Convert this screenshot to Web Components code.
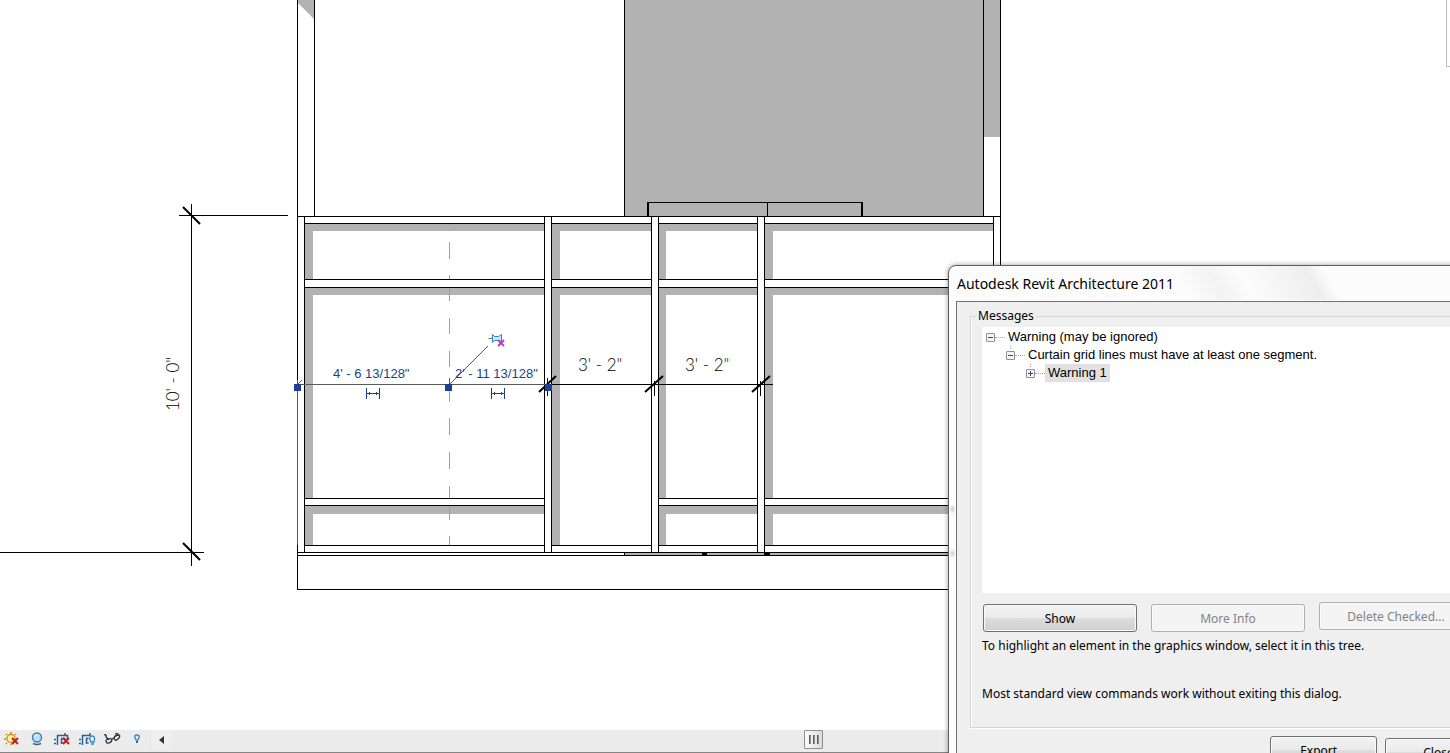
<!DOCTYPE html>
<html lang="en">
<head>
<meta charset="utf-8">
<title>Autodesk Revit Architecture 2011</title>
<style>
html, body { margin: 0; height: 100%; overflow: hidden; background: #fff; color: #000; font: 12px/16px "Noto Sans", sans-serif; }
</style>
</head>
<body>
<revit-app></revit-app>
<script>
const define = (name, html, setup) => {
  const template = document.createElement('template');
  template.innerHTML = html;
  customElements.define(name, class extends HTMLElement {
    constructor() {
      super();
      this.attachShadow({ mode: 'open' }).append(template.content.cloneNode(true));
    }
    connectedCallback() { if (setup) setup(this); }
  });
};

/* Elevation drawing: curtain wall, dimensions and the selected grid line */
define('elevation-view', `
<style>
:host { display: block; position: relative; overflow: hidden; background: #fff; }
svg { display: block; width: 100%; height: 100%; }
.cube { position: absolute; top: 0; right: 0; width: 3px; height: 66px; border: solid #bcbcbc; border-width: 0 0 1px 1px; }
.ln { stroke: #000; fill: none; stroke-width: 1; }
.gr { fill: #b2b2b2; }
.grid { fill: #e8921e; }
.note { font: 300 17px "Lato", "Liberation Sans", sans-serif; fill: #000; }
.temp { font: 13px "Liberation Sans", Arial, sans-serif; fill: #1c3f94; }
.grip { fill: #1c3f94; }
</style>
<svg role="img" aria-label="Curtain wall elevation" shape-rendering="crispEdges">
  <!-- room and jambs above -->
  <path class="gr" d="M625 0h358v216h-358zM984 0h16v137h-16z"/>
  <path class="gr" shape-rendering="auto" d="M298 0h16v19L298 3z"/>
  <path class="ln" d="M297.500 0v589M314.500 0v216M624.500 0v216M983.500 0v216M1000.500 0v552"/>
  <path class="ln" d="M648 202.500h214M767.500 202v14"/>
  <path d="M647 202h2v14h-2zM861 202h2v14h-2z"/>
  <!-- shaded reveals -->
  <path class="gr" d="M305 224h239v7H313v48h-8zM552 224h99v7H560v48h-8zM659 224h98v7H666v48h-7zM765 224h228v7H773v48h-8z"/>
  <path class="gr" d="M305 288h239v7H313v203h-8zM552 288h99v7H560v250h-8zM659 288h98v7H666v203h-7zM765 288h228v7H773v203h-8z"/>
  <path class="gr" d="M305 506h239v8H313v31h-8zM659 506h98v8H666v31h-7zM765 506h228v8H773v31h-8zM625 553h375v2H625z"/>
  <!-- mullions -->
  <path class="ln" d="M297 216.500H1000M304 223.500h240M551 223.500h100M658 223.500h99M764 223.500h229
    M304 279.500h240M551 279.500h100M658 279.500h99M764 279.500h229M304 287.500h240M551 287.500h100M658 287.500h99M764 287.500h229
    M304 498.500h240M658 498.500h99M764 498.500h229M304 505.500h240M658 505.500h99M764 505.500h229
    M304 545.500h240M551 545.500h100M658 545.500h99M764 545.500h229M297 552.500h703M297 555.500h703M297 589.500h703"/>
  <path class="ln" d="M304.500 217v335M544.500 217v335M551.500 217v335M651.500 217v335M658.500 217v335M757.500 217v335M764.500 217v335M993.500 217v335M624.500 552v3"/>
  <path d="M702 552h5v3h-5zM764 552h6v3h-6z"/>
  <!-- height dimension -->
  <path class="ln" d="M191.500 204v362M179 215.500h109M0 552.500h204"/>
  <path shape-rendering="auto" class="ln" style="stroke-width:2" d="M183 207l17 17M183 543l17 17"/>
  <text class="note" text-anchor="middle" transform="translate(179 384) rotate(-90)">10' - 0"</text>
  <!-- width dimensions -->
  <path class="ln" d="M548 384.500h225M547.500 378v18M654.500 381v15M760.500 381v15"/>
  <path shape-rendering="auto" class="ln" style="stroke-width:2" d="M539 392l17-16M645 392l18-16M752 392l18-16"/>
  <text class="note" x="578" y="371">3' - 2"</text>
  <text class="note" x="685" y="371">3' - 2"</text>
  <!-- selected grid line -->
  <path class="grid" d="M449 224h1v1h-1zM449 242h1v17h-1zM449 275h1v4h-1zM449 288h1v13h-1zM449 318h1v16h-1zM449 351h1v16h-1zM449 385h1v17h-1zM449 418h1v17h-1zM449 452h1v17h-1zM449 486h1v12h-1zM449 506h1v14h-1zM449 536h1v9h-1z"/>
  <path stroke="#5a5a5a" d="M297 384.500h251M297.500 380v165"/>
  <path stroke="#5a5a5a" shape-rendering="auto" d="M297 385l5-5M449 385l39-39M449.500 378v6" fill="none"/>
  <text class="temp" x="333" y="378">4' - 6 13/128"</text>
  <text class="temp" x="455" y="378">2' - 11 13/128"</text>
  <path class="grip" d="M294 384h7v7h-7zM445 384h7v7h-7zM545 384h7v7h-7z"/>
  <g fill="none" stroke="#1c3f94">
    <path d="M366.500 388v11M379.500 388v11M367 393.500h12M369.500 392v3M376.500 392v3"/>
    <path d="M491.500 388v11M504.500 388v11M492 393.500h12M494.500 392v3M501.500 392v3"/>
  </g>
  <!-- pushpin -->
  <g shape-rendering="auto" fill="none">
    <path stroke="#3c82b8" fill="#c5e8fa" d="M488.500 338.500h4M492.500 334.500v8l2-2h4l3 2v-8l-3 2h-4z"/>
    <path stroke="#b63fc0" stroke-width="2" d="M498 340l6 6M504 340l-6 6"/>
  </g>
</svg>
<div class="cube"></div>`);

define('tool-icon', `
<style>
:host { display: block; flex: none; width: 25px; }
button { display: flex; align-items: center; width: 100%; height: 18px; box-sizing: border-box; margin: 0; padding: 0 0 0 3px; border: 0; background: none; }
svg { display: block; width: 18px; height: 16px; fill: none; stroke-width: 1; }
</style>
<button type="button"><svg viewBox="0 0 18 16"></svg></button>`, host => {
  const art = {
    sun: '<circle cx="8" cy="7.500" r="4" fill="#fff0a8" stroke="#d39a1c" stroke-width="1.500"/><path stroke="#c08a1c" stroke-width="1.500" d="M8 1v2M3 3l1 1M13 3l-1 1M1 8h2M3 13l1-1M8 13v1"/><path stroke="#c0201c" stroke-width="2" d="M9 7l6 6M15 7l-6 6"/>',
    globe: '<circle cx="9" cy="6.500" r="4.500" fill="#b9ddf3" stroke="#3d7fb2" stroke-width="1.400"/><path stroke="#fff" d="M7 6q0-2 2-2"/><path stroke="#4b6170" stroke-width="1.400" d="M5 12.500q4 2 8 0"/>',
    crop: '<path stroke="#285f91" stroke-width="1.500" d="M4.500 14V4.500h10v4M12 2v3M8.500 13V7.500h4"/><path stroke="#285f91" stroke-width="1.500" d="M1 8.500h2M1 12.500h2"/><path stroke="#8c3045" d="M9 12h2"/><path stroke="#c0201c" stroke-width="2" d="M10 7l6 6M16 7l-6 6"/>',
    reveal: '<path stroke="#285f91" stroke-width="1.500" d="M4.500 14V4.500h7M12 2v3M8.500 13V7.500h2M1 8.500h2M1 12.500h2"/><path stroke="#8c3045" d="M9 12h2"/><path fill="#d6efff" stroke="#3984bd" stroke-width="1.300" d="M13 11q-3-6 1-6t2 6zM13 13h3"/>',
    glasses: '<path stroke="#25323b" stroke-width="1.300" d="M1 4q3-1 2 2l3 3M3 9q0 4 3 3t3-4q-3-1-6 1M9 8l2-1M11 7q1 4 4 1t1-4q-4 0-5 3M16 4q-1-2-4-1"/>',
    bulb: '<path fill="#d6efff" stroke="#3984bd" stroke-width="1.400" d="M8 9q-3-5 1-5t1 5z"/><path stroke="#286a9a" stroke-width="2" d="M8 11h2"/>'
  };
  host.shadowRoot.querySelector('svg').innerHTML = art[host.getAttribute('name')];
  host.shadowRoot.querySelector('button').setAttribute('aria-label', host.getAttribute('label'));
});

define('view-bar', `
<style>
:host { display: flex; box-sizing: border-box; height: 23px; background: #ececec; border-bottom: 1px solid #858585; }
.scroll { display: flex; flex: 1; min-width: 0; border-left: 1px solid #e4e4e4; background: #ebebeb; }
button { flex: none; box-sizing: border-box; margin: 0; padding: 0; display: flex; align-items: center; justify-content: center; }
.arrow { width: 20px; height: 19px; border: 0; background: #efefef; }
.arrow i { border: solid transparent; border-width: 4px 5px 4px 0; border-right-color: #333; }
.before { flex: 633 1 0; }
.after { flex: 627 1 0; }
.thumb { width: 19px; height: 19px; border: 1px solid #8e8e8e; border-radius: 1px; background: linear-gradient(90deg, #fafafa, #dcdcdc); gap: 2px; }
.thumb i { width: 2px; height: 9px; background: linear-gradient(90deg, #444, #aaa); }
</style>
<tool-icon name="sun" label="Sun path off"></tool-icon>
<tool-icon name="globe" label="Visual style"></tool-icon>
<tool-icon name="crop" label="Do not crop view"></tool-icon>
<tool-icon name="reveal" label="Show crop region"></tool-icon>
<tool-icon name="glasses" label="Temporary hide/isolate"></tool-icon>
<tool-icon name="bulb" label="Reveal hidden elements"></tool-icon>
<div class="scroll">
  <button class="arrow" type="button" aria-label="Scroll left"><i></i></button>
  <span class="before"></span>
  <button class="thumb" type="button" aria-label="Scroll position"><i></i><i></i><i></i></button>
  <span class="after"></span>
</div>`);

define('dialog-button', `
<style>
:host { display: block; flex: none; width: 154px; height: 28px; }
button { width: 100%; height: 100%; box-sizing: border-box; margin: 0; padding: 1px 0 0; border: 1px solid #707070; border-radius: 3px; box-shadow: inset 0 0 0 1px #fafafa; background: linear-gradient(#f2f2f2, #ebebeb 48%, #dddddd 52%, #cfcfcf); font: inherit; color: #000; text-align: center; }
button:disabled { border-color: #b0b0b0; background: #f4f4f4; color: #838383; }
</style>
<button type="button"><slot></slot></button>`, host => {
  host.shadowRoot.querySelector('button').disabled = host.hasAttribute('disabled');
});

define('tree-item', `
<style>
:host { display: block; }
.row { display: flex; align-items: center; height: 18px; }
button { position: relative; flex: none; width: 9px; height: 9px; box-sizing: border-box; margin: 0; padding: 0; border: 1px solid #919191; border-radius: 1px; background: #f5f5f5; }
button::before, :host([closed]) button::after { content: ""; position: absolute; left: 1px; top: 3px; width: 5px; height: 1px; background: #34458c; }
:host([closed]) button::after { transform: rotate(90deg); }
.stem { flex: none; width: 10px; border-top: 1px dotted #a0a0a0; }
.text { padding: 0 3px; line-height: 18px; white-space: nowrap; }
:host([selected]) .text { background: #e1e1e1; }
.kids { padding-left: 20px; }
:host([child]) .row { background: repeating-linear-gradient(#a0a0a0 0 1px, #fff 1px 2px) 4px 0 / 1px 4px no-repeat; }
</style>
<div class="row"><button type="button" aria-label="Toggle"></button><span class="stem"></span><span class="text"><slot name="label"></slot></span></div>
<div class="kids"><slot></slot></div>`);

define('message-dialog', `
<style>
:host { display: flex; flex-direction: column; box-sizing: border-box; border: 1px solid #5f5f5f; border-radius: 8px; padding: 0 7px 7px; overflow: hidden;
  background:
    radial-gradient(ellipse at center, #ccc, transparent 70%) 0 238px / 7px 10px no-repeat,
    radial-gradient(ellipse at center, #ccc, transparent 70%) 0 283px / 7px 9px no-repeat,
    linear-gradient(60deg, transparent 210px, #f3f3f3 240px, #fcfcfc 265px, #f4f4f4 300px, #eeeeee 325px, transparent 340px) 0 0 / 100% 34px no-repeat,
    #fcfcfc;
  box-shadow: 0 0 5px rgba(0, 0, 0, .4); }
header { height: 35px; flex: none; padding-left: 1px; }
h1 { margin: 0; font: 14px/36px "Noto Sans", sans-serif; white-space: nowrap; }
.client { flex: 1; display: flex; flex-direction: column; border: 1px solid #707070; background: #efefef; padding: 6px 16px 0 13px; }
fieldset { margin: 0; min-width: 0; box-sizing: border-box; height: 420px; border: 1px solid #d6d6d6; padding: 0 12px 0 11px; box-shadow: inset 1px 0 #fff, 0 1px #fff; }
legend { padding: 0 2px; margin-left: -6px; line-height: 16px; }
.tree { box-sizing: border-box; height: 266px; margin: 3px 0 0; padding: 1px 0 0 4px; background: #fff; font: 13px/18px "Liberation Sans", Arial, sans-serif; }
.row { display: flex; gap: 14px; margin: 11px 0 0 1px; align-items: center; }
dialog-button.raised { margin-top: -4px; }
p { margin: 0; white-space: nowrap; }
.hint { margin-top: 6px; }
.hint + .hint { margin-top: 32px; }
footer { display: flex; justify-content: flex-end; gap: 8px; margin-top: 8px; }
footer dialog-button { width: 107px; }
footer .last { margin-top: 2px; }
</style>
<header><h1>Autodesk Revit Architecture 2011</h1></header>
<div class="client">
  <fieldset>
    <legend>Messages</legend>
    <div class="tree">
      <tree-item><span slot="label">Warning (may be ignored)</span>
        <tree-item child><span slot="label">Curtain grid lines must have at least one segment.</span>
          <tree-item child closed selected><span slot="label">Warning 1</span></tree-item>
        </tree-item>
      </tree-item>
    </div>
    <div class="row">
      <dialog-button>Show</dialog-button>
      <dialog-button disabled>More Info</dialog-button>
      <dialog-button disabled class="raised">Delete Checked...</dialog-button>
    </div>
    <p class="hint">To highlight an element in the graphics window, select it in this tree.</p>
    <p class="hint">Most standard view commands work without exiting this dialog.</p>
  </fieldset>
  <footer>
    <dialog-button>Export...</dialog-button>
    <dialog-button class="last">Close</dialog-button>
  </footer>
</div>`);

define('revit-app', `
<style>
:host { display: flex; flex-direction: column; position: relative; height: 100vh; overflow: hidden; }
elevation-view { flex: 1; min-height: 0; }
view-bar { flex: none; }
message-dialog { position: absolute; left: 948px; top: 265px; right: -67px; bottom: -60px; }
</style>
<elevation-view></elevation-view>
<view-bar></view-bar>
<message-dialog role="dialog" aria-label="Autodesk Revit Architecture 2011"></message-dialog>`);
</script>
</body>
</html>
